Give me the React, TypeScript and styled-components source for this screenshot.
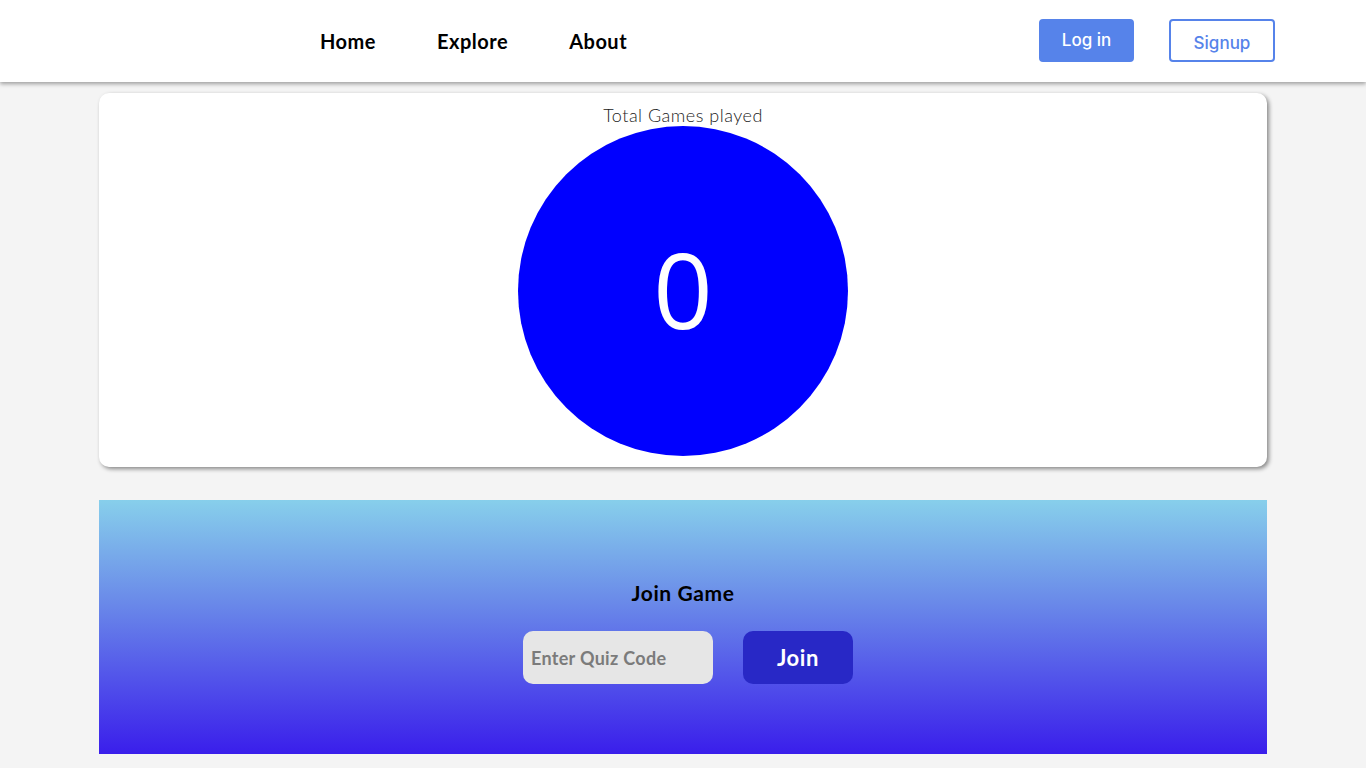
import React from "react";
import styled, { createGlobalStyle } from "styled-components";

const Global = createGlobalStyle`
  html, body { margin: 0; padding: 0; }
  body {
    background: #f4f4f4;
    font-family: "Lato", "Noto Sans", sans-serif;
    color: #000;
  }
  * { box-sizing: border-box; }
`;

const NavBar = styled.header`
  height: 82px;
  background: #fff;
  box-shadow: 0 2px 4px rgba(0, 0, 0, 0.35);
  display: flex;
  align-items: center;
  justify-content: space-between;
  padding: 0 91px 0 320px;
  position: relative;
  z-index: 1;
`;

const Links = styled.nav`
  display: flex;
  gap: 61px;
  align-items: center;
`;

const NavLink = styled.a`
  font-size: 20px;
  font-weight: 700;
  color: #000;
  text-decoration: none;
  letter-spacing: 0.5px;
`;

const Actions = styled.div`
  display: flex;
  gap: 35px;
  align-items: center;
  padding-bottom: 1px;
`;

const AuthButton = styled.button<{ $outline?: boolean }>`
  height: 43px;
  width: ${(p) => (p.$outline ? "106px" : "95px")};
  border-radius: 4px;
  font-family: "Inter", "Noto Sans", sans-serif;
  font-size: 17px;
  font-weight: 500;
  cursor: pointer;
  border: 2px solid #5683ea;
  background: ${(p) => (p.$outline ? "#fff" : "#5683ea")};
  color: ${(p) => (p.$outline ? "#5683ea" : "#fff")};
  padding: ${(p) => (p.$outline ? "4px 0 0" : "0 0 1px")};
`;

const Main = styled.main`
  width: 1168px;
  margin: 11px auto 0;
  display: flex;
  flex-direction: column;
  gap: 33px;
`;

const StatsCard = styled.section`
  background: #fff;
  border-radius: 10px;
  box-shadow: 2px 2px 4px rgba(0, 0, 0, 0.45);
  display: flex;
  flex-direction: column;
  align-items: center;
  padding: 11px 0 11px;
  height: 374px;
`;

const StatLabel = styled.div`
  font-size: 18px;
  font-weight: 300;
  color: #222;
  line-height: 22px;
  letter-spacing: 0.5px;
`;

const Circle = styled.div`
  width: 330px;
  height: 330px;
  border-radius: 50%;
  background: #0000ff;
  display: flex;
  align-items: center;
  justify-content: center;
  color: #fff;
  font-family: "Open Sans", "DejaVu Sans", sans-serif;
  font-size: 104px;
  font-weight: 400;
  line-height: 1;
  padding-bottom: 4px;
`;

const JoinPanel = styled.section`
  height: 254px;
  background: linear-gradient(to bottom, #87cfeb 0%, #6a8ae9 40%, #3a1eeb 100%);
  display: flex;
  flex-direction: column;
  align-items: center;
  padding-top: 81px;
`;

const JoinTitle = styled.h2`
  margin: 0;
  font-size: 21px;
  font-weight: 700;
  line-height: 24px;
  letter-spacing: 0.6px;
  color: #000;
`;

const JoinRow = styled.div`
  display: flex;
  gap: 30px;
  margin-top: 26px;
  padding-left: 10px;
`;

const CodeInput = styled.input`
  width: 190px;
  height: 53px;
  border: none;
  border-radius: 10px;
  background: #e6e6e6;
  padding: 0 8px;
  font-family: "Lato", "Noto Sans", sans-serif;
  font-size: 18px;
  font-weight: 700;
  letter-spacing: 0.3px;
  color: #333;
  outline: none;
  &::placeholder {
    color: #7b7b7b;
  }
`;

const JoinButton = styled.button`
  width: 110px;
  height: 53px;
  border: none;
  border-radius: 10px;
  background: #2828c6;
  color: #fff;
  font-family: "Lato", "Noto Sans", sans-serif;
  font-size: 22px;
  font-weight: 700;
  letter-spacing: 0.6px;
  cursor: pointer;
`;

export default function App() {
  return (
    <>
      <Global />
      <NavBar>
        <Links>
          <NavLink href="#">Home</NavLink>
          <NavLink href="#">Explore</NavLink>
          <NavLink href="#">About</NavLink>
        </Links>
        <Actions>
          <AuthButton>Log in</AuthButton>
          <AuthButton $outline>Signup</AuthButton>
        </Actions>
      </NavBar>
      <Main>
        <StatsCard>
          <StatLabel>Total Games played</StatLabel>
          <Circle>0</Circle>
        </StatsCard>
        <JoinPanel>
          <JoinTitle>Join Game</JoinTitle>
          <JoinRow>
            <CodeInput placeholder="Enter Quiz Code" />
            <JoinButton>Join</JoinButton>
          </JoinRow>
        </JoinPanel>
      </Main>
    </>
  );
}
